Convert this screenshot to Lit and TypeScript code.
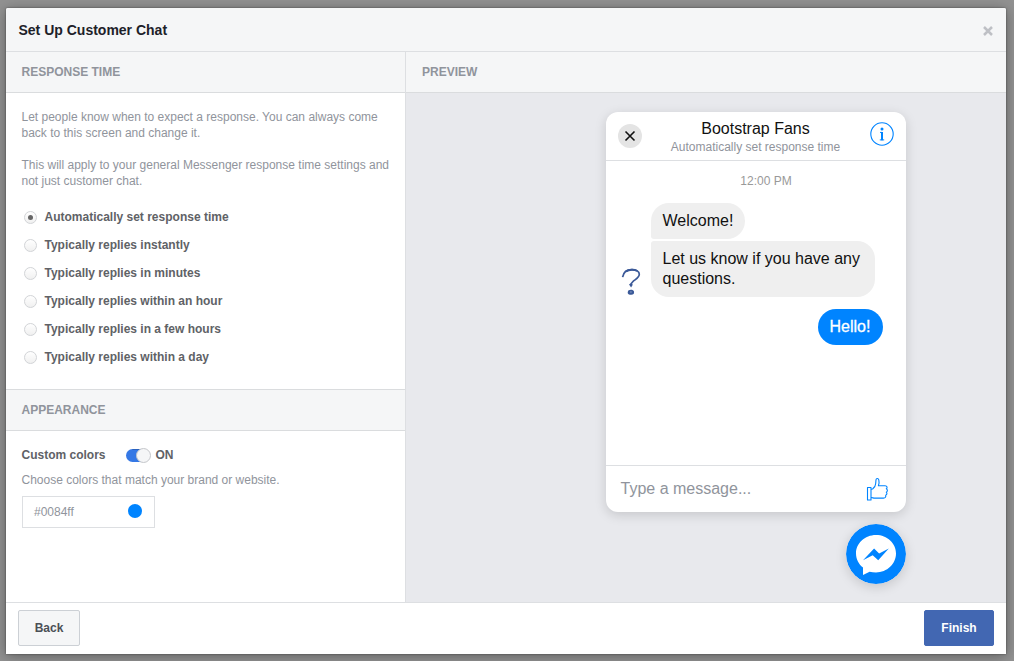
import { LitElement, html, css } from "lit";
import { customElement, state } from "lit/decorators.js";

@customElement("chat-preview")
class ChatPreview extends LitElement {
  static styles = css`
    :host { display: block; width: 300px; }
    .card { width: 300px; height: 400px; background: #fff; border-radius: 12px; box-shadow: 0 3px 12px rgba(0,0,0,.15); display: flex; flex-direction: column; color: #111; }
    .top { box-sizing: border-box; height: 49px; flex: none; border-bottom: 1px solid #dddfe2; display: flex; justify-content: space-between; padding: 10px 12px 0; }
    .close { width: 24px; height: 24px; margin-top: 2px; display: block; }
    .info { width: 24px; height: 24px; display: block; }
    .names { text-align: center; margin-top: -3px; margin-left: -1px; }
    .name { font-size: 16px; line-height: 20px; }
    .status { font-size: 12px; line-height: 16px; color: #90949c; }
    .body { flex: 1; display: flex; flex-direction: column; padding: 12px 23px 0 15px; }
    .time { text-align: center; font-size: 12px; line-height: 16px; color: #999; padding-left: 28px; }
    .thread { display: flex; align-items: flex-end; gap: 10px; margin-top: 14px; }
    .avatar { width: 20px; height: 30px; display: block; }
    .bubbles { display: flex; flex-direction: column; align-items: flex-start; gap: 2px; }
    .bubble { box-sizing: border-box; background: #efefef; font-size: 16px; line-height: 20px; padding: 8px 11px 8px 11.500px; }
    .first { border-radius: 18px 18px 18px 3px; height: 36px; width: 94px; }
    .second { border-radius: 3px 18px 18px 18px; width: 224px; height: 56px; }
    .mine { align-self: flex-end; margin-top: 12px; background: #0084ff; color: #fff; border-radius: 18px; height: 36px; width: 65px; -webkit-text-stroke: .3px #fff; }
    .compose { box-sizing: border-box; height: 47px; flex: none; border-top: 1px solid #dddfe2; display: flex; justify-content: space-between; align-items: center; padding: 0 17px 0 14.500px; font-size: 16px; color: #90949c; }
    .like { width: 24px; height: 24px; display: block; }
    .launcher { width: 60px; height: 60px; margin: 12px 0 0 auto; border-radius: 50%; box-shadow: 0 3px 12px rgba(0,0,0,.15); display: flex; }
  `;
  render() {
    return html`
      <div class="card">
        <div class="top">
          <svg class="close" viewBox="0 0 24 24"><circle cx="12" cy="12" r="12" fill="#e4e4e4"/><path d="M7.500 7.500l9 9M16.500 7.500l-9 9" stroke="#111" stroke-width="1.600"/></svg>
          <div class="names">
            <div class="name">Bootstrap Fans</div>
            <div class="status">Automatically set response time</div>
          </div>
          <svg class="info" viewBox="0 0 24 24"><circle cx="12" cy="12" r="11.200" fill="none" stroke="#0084ff" stroke-width="1.100"/><circle cx="12" cy="7" r="1.500" fill="#0084ff"/><path d="M10 10.400h2M9.800 17.900h4.400" fill="none" stroke="#0084ff" stroke-width="1"/><path d="M11 9.900h2v8.300h-2z" fill="#0084ff"/></svg>
        </div>
        <div class="body">
          <div class="time">12:00 PM</div>
          <div class="thread">
            <svg class="avatar" viewBox="0 0 20 30"><path d="M1.600 10.200C2.400 5 6 2.600 10.800 2.600c4.500 0 7.600 1.800 7.500 4.700-.1 3.500-3.700 4.900-6.200 7-1.700 1.400-2.300 2.800-2.200 4.400" fill="none" stroke="#3b5998" stroke-width="1.700"/><path d="M5 4.400C8 2.400 13.500 1.900 16.200 4" fill="none" stroke="#3b5998" stroke-width="2"/><path d="M8 17.600l2.100-1.700 1.700 1.900-1.700 2.800z" fill="#3b5998"/><path d="M7.600 23.300c1.700-.9 5-.7 5.400 1.300.4 2.200-.6 3.200-2.700 3.200-2.400 0-3.700-.8-3.600-2.300.1-.9.400-1.700.9-2.200z" fill="#3b5998"/><path d="M9 25h1.800" stroke="#a9b8d7" stroke-width=".7"/></svg>
            <div class="bubbles">
              <div class="bubble first">Welcome!</div>
              <div class="bubble second">Let us know if you have any questions.</div>
            </div>
          </div>
          <div class="bubble mine">Hello!</div>
        </div>
        <div class="compose">
          <span>Type a message...</span>
          <svg class="like" viewBox="0 0 24 24" fill="none" stroke="#0084ff" stroke-width="1.100" stroke-linejoin="round"><path d="M2.500 10.500h3.500v12.500h-3.500z"/><path d="M6 12.200l1.600-.2c1.800-1.500 3-3.400 3.100-5.600l.3-3.700c.2-1.600 2.400-1.500 2.800.2.500 2 .2 4.200-.4 5.800h6.700c2.200.1 2.500 2.300 1.200 3.100 1.500.8 1.400 2.700 0 3.400 1 .9.700 2.500-.6 3 .5 1.500-.4 2.900-2.200 2.900H9.300c-1 0-1.600-.6-3.300-.6"/></svg>
        </div>
      </div>
      <svg class="launcher" viewBox="0 0 60 60"><circle cx="30" cy="30" r="30" fill="#0084ff"/><path d="M30 11C18.800 11 10 19.300 10 29.600c0 5.600 2.600 10.700 7 14V51l6.600-3.300c2 .6 4.200.8 6.400.8 11.200 0 20-8.500 20-18.900S41.200 11 30 11z" fill="#fff"/><path d="M17 36.300L28.100 24.600l5 5L42.800 24.600 32.200 36.200l-5.500-4.900z" fill="#0084ff"/></svg>
    `;
  }
}

@customElement("app-root")
class AppRoot extends LitElement {
  @state() selected = 0;
  options = ["Automatically set response time", "Typically replies instantly", "Typically replies in minutes", "Typically replies within an hour", "Typically replies in a few hours", "Typically replies within a day"];
  static styles = css`
    :host { display: block; box-sizing: border-box; height: 661px; padding: 8px 8px 7px 6px; background: #929292; font: 12px/16px "Liberation Sans", Arial, sans-serif; color: #90949c; overflow: hidden; }
    .dialog { height: 646px; background: #fff; border-radius: 2px 2px 0 0; box-shadow: 0 2px 14px rgba(0,0,0,.35), 0 0 2px rgba(0,0,0,.5); display: flex; flex-direction: column; }
    .header { box-sizing: border-box; height: 44px; flex: none; background: #f5f6f7; border-bottom: 1px solid #dddfe2; border-radius: 2px 2px 0 0; display: flex; align-items: center; justify-content: space-between; padding: 0 13px 0 12.500px; color: #1d2129; font-size: 14px; font-weight: bold; }
    .dismiss { width: 10px; height: 10px; display: block; margin-top: 3px; }
    .main { flex: 1; min-height: 0; display: flex; }
    .left { box-sizing: border-box; width: 400px; border-right: 1px solid #dddfe2; }
    .right { flex: 1; background: #e8e9ed; }
    .section { box-sizing: border-box; height: 41px; background: #f5f6f7; border-bottom: 1px solid #dadcde; padding: 12px 16px; font-weight: bold; }
    .left .section { padding-left: 15.500px; }
    .left .appearance { border-top: 1px solid #dadcde; height: 42px; }
    .copy { padding: 16px 0 0 15.500px; height: 99px; white-space: nowrap; box-sizing: border-box; }
    .copy p { margin: 0 0 16px; }
    .options { height: 197px; padding-left: 18px; box-sizing: border-box; padding-top: 11px; }
    .option { height: 28px; display: flex; align-items: center; gap: 7.500px; color: #606266; font-weight: bold; }
    .radio { box-sizing: border-box; width: 13px; height: 13px; border: 1px solid #d2d4d7; border-radius: 50%; background: linear-gradient(#fff, #f0f0f0); display: grid; place-items: center; }
    .radio.on::after { content: ""; width: 5px; height: 5px; border-radius: 50%; background: #666; }
    .colors { padding: 15px 16px 0; }
    .row { display: flex; align-items: center; color: #606266; font-weight: bold; height: 17px; }
    .label { width: 104px; margin-left: -.5px; }
    .toggle { width: 25px; height: 15px; display: block; margin: 1px 5px 0 0; }
    .on-text { margin-top: 1px; }
    .hint { margin: 9px 0 8px -.5px; }
    .field { box-sizing: border-box; width: 133px; height: 32px; border: 1px solid #dddfe2; display: flex; justify-content: space-between; align-items: center; padding: 0 12px 0 11px; }
    .swatch { width: 14px; height: 14px; border-radius: 50%; margin-top: -2px; }
    .stage { display: flex; justify-content: flex-end; padding: 19px 100px 0 0; }
    .footer { box-sizing: border-box; height: 52px; flex: none; border-top: 1px solid #dddfe2; display: flex; justify-content: space-between; padding: 7px 12px; }
    .btn { box-sizing: border-box; height: 36px; border: 1px solid #ccd0d5; border-radius: 2px; background: #f5f6f7; color: #4b4f56; font: bold 12px/34px "Liberation Sans", Arial, sans-serif; padding: 0; width: 62px; }
    .primary { background: #4267b2; border-color: #4267b2; color: #fff; width: 70px; }
  `;
  render() {
    return html`
      <div class="dialog">
        <div class="header"><span>Set Up Customer Chat</span>
          <svg class="dismiss" viewBox="0 0 10 10"><path d="M1 1l8 8M9 1L1 9" stroke="#bec0c5" stroke-width="2.500"/></svg>
        </div>
        <div class="main">
          <div class="left">
            <div class="section">RESPONSE TIME</div>
            <div class="copy">
              <p>Let people know when to expect a response. You can always come<br>back to this screen and change it.</p>
              <p>This will apply to your general Messenger response time settings and<br>not just customer chat.</p>
            </div>
            <div class="options">
              ${this.options.map((o, i) => html`<div class="option" @click=${() => (this.selected = i)}><span class="radio ${i === this.selected ? "on" : ""}"></span><span>${o}</span></div>`)}
            </div>
            <div class="section appearance">APPEARANCE</div>
            <div class="colors">
              <div class="row"><span class="label">Custom colors</span>
                <svg class="toggle" viewBox="0 0 25 15"><rect x="0" y="1" width="22" height="13" rx="6.500" fill="#3578e5"/><path d="M6.500 1.500h10" stroke="#2b62bd"/><circle cx="17.500" cy="7.500" r="7" fill="#f5f6f7" stroke="#c4c6ca"/></svg>
                <span class="on-text">ON</span></div>
              <div class="hint">Choose colors that match your brand or website.</div>
              <div class="field"><span>#0084ff</span><span class="swatch" style="background:#0084ff"></span></div>
            </div>
          </div>
          <div class="right">
            <div class="section">PREVIEW</div>
            <div class="stage"><chat-preview></chat-preview></div>
          </div>
        </div>
        <div class="footer"><button class="btn">Back</button><button class="btn primary">Finish</button></div>
      </div>
    `;
  }
}
